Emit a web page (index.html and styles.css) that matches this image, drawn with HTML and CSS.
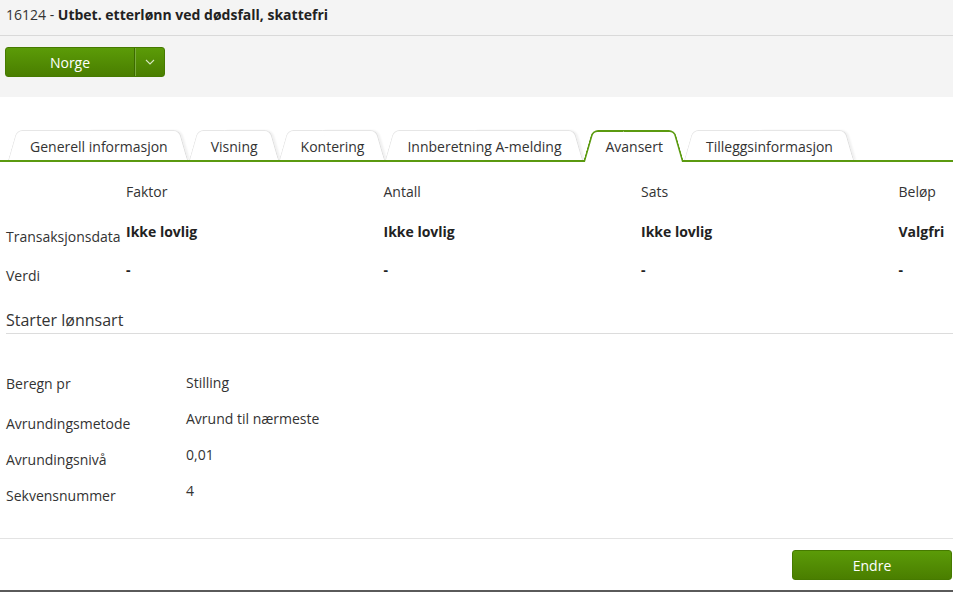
FILE: index.html
```html
<!DOCTYPE html>
<html lang="no">
<head>
    <meta charset="UTF-8">
    <meta name="viewport" content="width=device-width, initial-scale=1.0">
    <title>Lønnsart 16124</title>
    <link rel="stylesheet" href="styles.css">
</head>
<body>
    <div class="page">
        <div class="title-bar">
            16124 - <strong>Utbet. etterlønn ved dødsfall, skattefri</strong>
        </div>
        <div class="toolbar">
            <div class="split-btn">
                <button class="split-main">Norge</button>
                <button class="split-caret">
                    <svg width="10" height="6" viewBox="0 0 10 6"><path d="M1 1 L5 5 L9 1" fill="none" stroke="#d6e6c0" stroke-width="1.1"/></svg>
                </button>
            </div>
        </div>

        <div class="content">
            <ul class="tabs">
                <li class="tab">Generell informasjon</li>
                <li class="tab">Visning</li>
                <li class="tab">Kontering</li>
                <li class="tab">Innberetning A-melding</li>
                <li class="tab active">Avansert</li>
                <li class="tab">Tilleggsinformasjon</li>
            </ul>

            <div class="field-grid">
                <div class="grid-label"></div>
                <div class="grid-head">Faktor</div>
                <div class="grid-head">Antall</div>
                <div class="grid-head">Sats</div>
                <div class="grid-head">Beløp</div>

                <div class="grid-label">Transaksjonsdata</div>
                <div class="grid-value">Ikke lovlig</div>
                <div class="grid-value">Ikke lovlig</div>
                <div class="grid-value">Ikke lovlig</div>
                <div class="grid-value">Valgfri</div>

                <div class="grid-label">Verdi</div>
                <div class="grid-value">-</div>
                <div class="grid-value">-</div>
                <div class="grid-value">-</div>
                <div class="grid-value">-</div>
            </div>

            <div class="section-title">Starter lønnsart</div>

            <div class="props">
                <div class="prop-row first">
                    <div class="prop-label">Beregn pr</div>
                    <div class="prop-value">Stilling</div>
                </div>
                <div class="prop-row">
                    <div class="prop-label">Avrundingsmetode</div>
                    <div class="prop-value">Avrund til nærmeste</div>
                </div>
                <div class="prop-row">
                    <div class="prop-label">Avrundingsnivå</div>
                    <div class="prop-value">0,01</div>
                </div>
                <div class="prop-row">
                    <div class="prop-label">Sekvensnummer</div>
                    <div class="prop-value">4</div>
                </div>
            </div>
        </div>

        <div class="form-actions">
            <button class="green-button">Endre</button>
        </div>
        <div class="bottom-edge"></div>
    </div>
</body>
</html>
```

FILE: styles.css
```css
body {
    font-family: "Open Sans", "Liberation Sans", sans-serif;
    font-size: 14px;
    color: #333;
    margin: 0;
    background: #fff;
    overflow: hidden;
}
.page {
    width: 953px;
    height: 592px;
    overflow: hidden;
}
.title-bar {
    background: #f4f4f4;
    padding: 5px 6px 0;
    height: 30px;
    line-height: 20px;
    border-bottom: 1px solid #d9d9d9;
    white-space: nowrap;
}
.title-bar strong {
    color: #222;
}
.toolbar {
    background: #f4f4f4;
    height: 50px;
    padding: 11px 0 0 5px;
}
.split-btn {
    display: inline-flex;
    height: 30px;
    border-radius: 3px;
    border: 1px solid #467a00;
    background: linear-gradient(#5b9b08, #4a7e00);
    box-sizing: border-box;
    overflow: hidden;
}
.split-btn button {
    background: none;
    border: none;
    color: #fff;
    font-family: inherit;
    font-size: 14px;
    padding: 0;
    cursor: pointer;
}
.split-main {
    width: 129px;
    border-right: 1px solid #3d6a00 !important;
    box-shadow: 1px 0 0 #79ab3c;
}
.split-caret {
    width: 29px;
    display: flex;
    align-items: center;
    justify-content: center;
}

/* Tabs */
.tabs {
    list-style: none;
    margin: 33px 0 0;
    padding: 0 0 0 8px;
    display: flex;
    height: 30px;
    border-bottom: 2px solid #5b9a10;
}
.tab {
    position: relative;
    z-index: 0;
    height: 30px;
    line-height: 34px;
    padding: 0 21px 0 22px;
    color: #333;
    white-space: nowrap;
}
.tab::before, .tab::after {
    content: '';
    position: absolute;
    top: 0;
    bottom: 0;
    width: 50%;
    background: #fff;
    border-top: 1px solid #e6e6e6;
    z-index: -1;
}
.tab::before {
    left: 0;
    border-left: 1px solid #e6e6e6;
    border-top-left-radius: 6px;
    transform: skewX(-16deg);
    transform-origin: bottom left;
}
.tab::after {
    right: 0;
    border-right: 1px solid #dcdcdc;
    border-top-right-radius: 6px;
    transform: skewX(16deg);
    transform-origin: bottom right;
    box-shadow: 2px 0 2px rgba(0, 0, 0, 0.06);
}
.tab.active {
    z-index: 2;
    margin: 0 0 0 1px;
}
.tab.active::before, .tab.active::after {
    bottom: -2px;
    border-top: 2px solid #5b9a10;
    box-shadow: none;
}
.tab.active::before {
    border-left: 2px solid #5b9a10;
}
.tab.active::after {
    border-right: 2px solid #5b9a10;
}

/* Faktor / Antall / Sats / Beløp */
.field-grid {
    display: grid;
    grid-template-columns: 120px repeat(4, 257.5px);
    grid-template-rows: 40px 38px 40px;
    margin-top: 20px;
    padding-left: 6px;
    line-height: 20px;
    white-space: nowrap;
}
.grid-label {
    padding-top: 5px;
}
.grid-value {
    font-weight: bold;
    color: #222;
}
.grid-label:nth-child(11) {
    padding-top: 6px;
}

.section-title {
    font-size: 16px;
    line-height: 22px;
    margin: 9px 0 0 6px;
    padding-bottom: 2px;
    border-bottom: 1px solid #dcdcdc;
}

/* Starter lønnsart */
.props {
    padding: 39px 0 0 6px;
    height: 165px;
}
.prop-row {
    display: flex;
    height: 36px;
    line-height: 20px;
}
.prop-label {
    width: 180px;
    padding-top: 5px;
}
.prop-row.first .prop-label {
    padding-top: 1px;
}
.prop-value {
    color: #333;
}

.form-actions {
    border-top: 1px solid #e3e3e3;
    padding: 11px 1px 0 0;
    height: 40px;
    display: flex;
    justify-content: flex-end;
}
.green-button {
    width: 160px;
    height: 30px;
    border: 1px solid #467a00;
    border-radius: 3px;
    background: linear-gradient(#5b9b08, #4a7e00);
    color: #fff;
    font-family: inherit;
    font-size: 14px;
    cursor: pointer;
}
.bottom-edge {
    height: 2px;
    background: #5a5a5a;
}
```
